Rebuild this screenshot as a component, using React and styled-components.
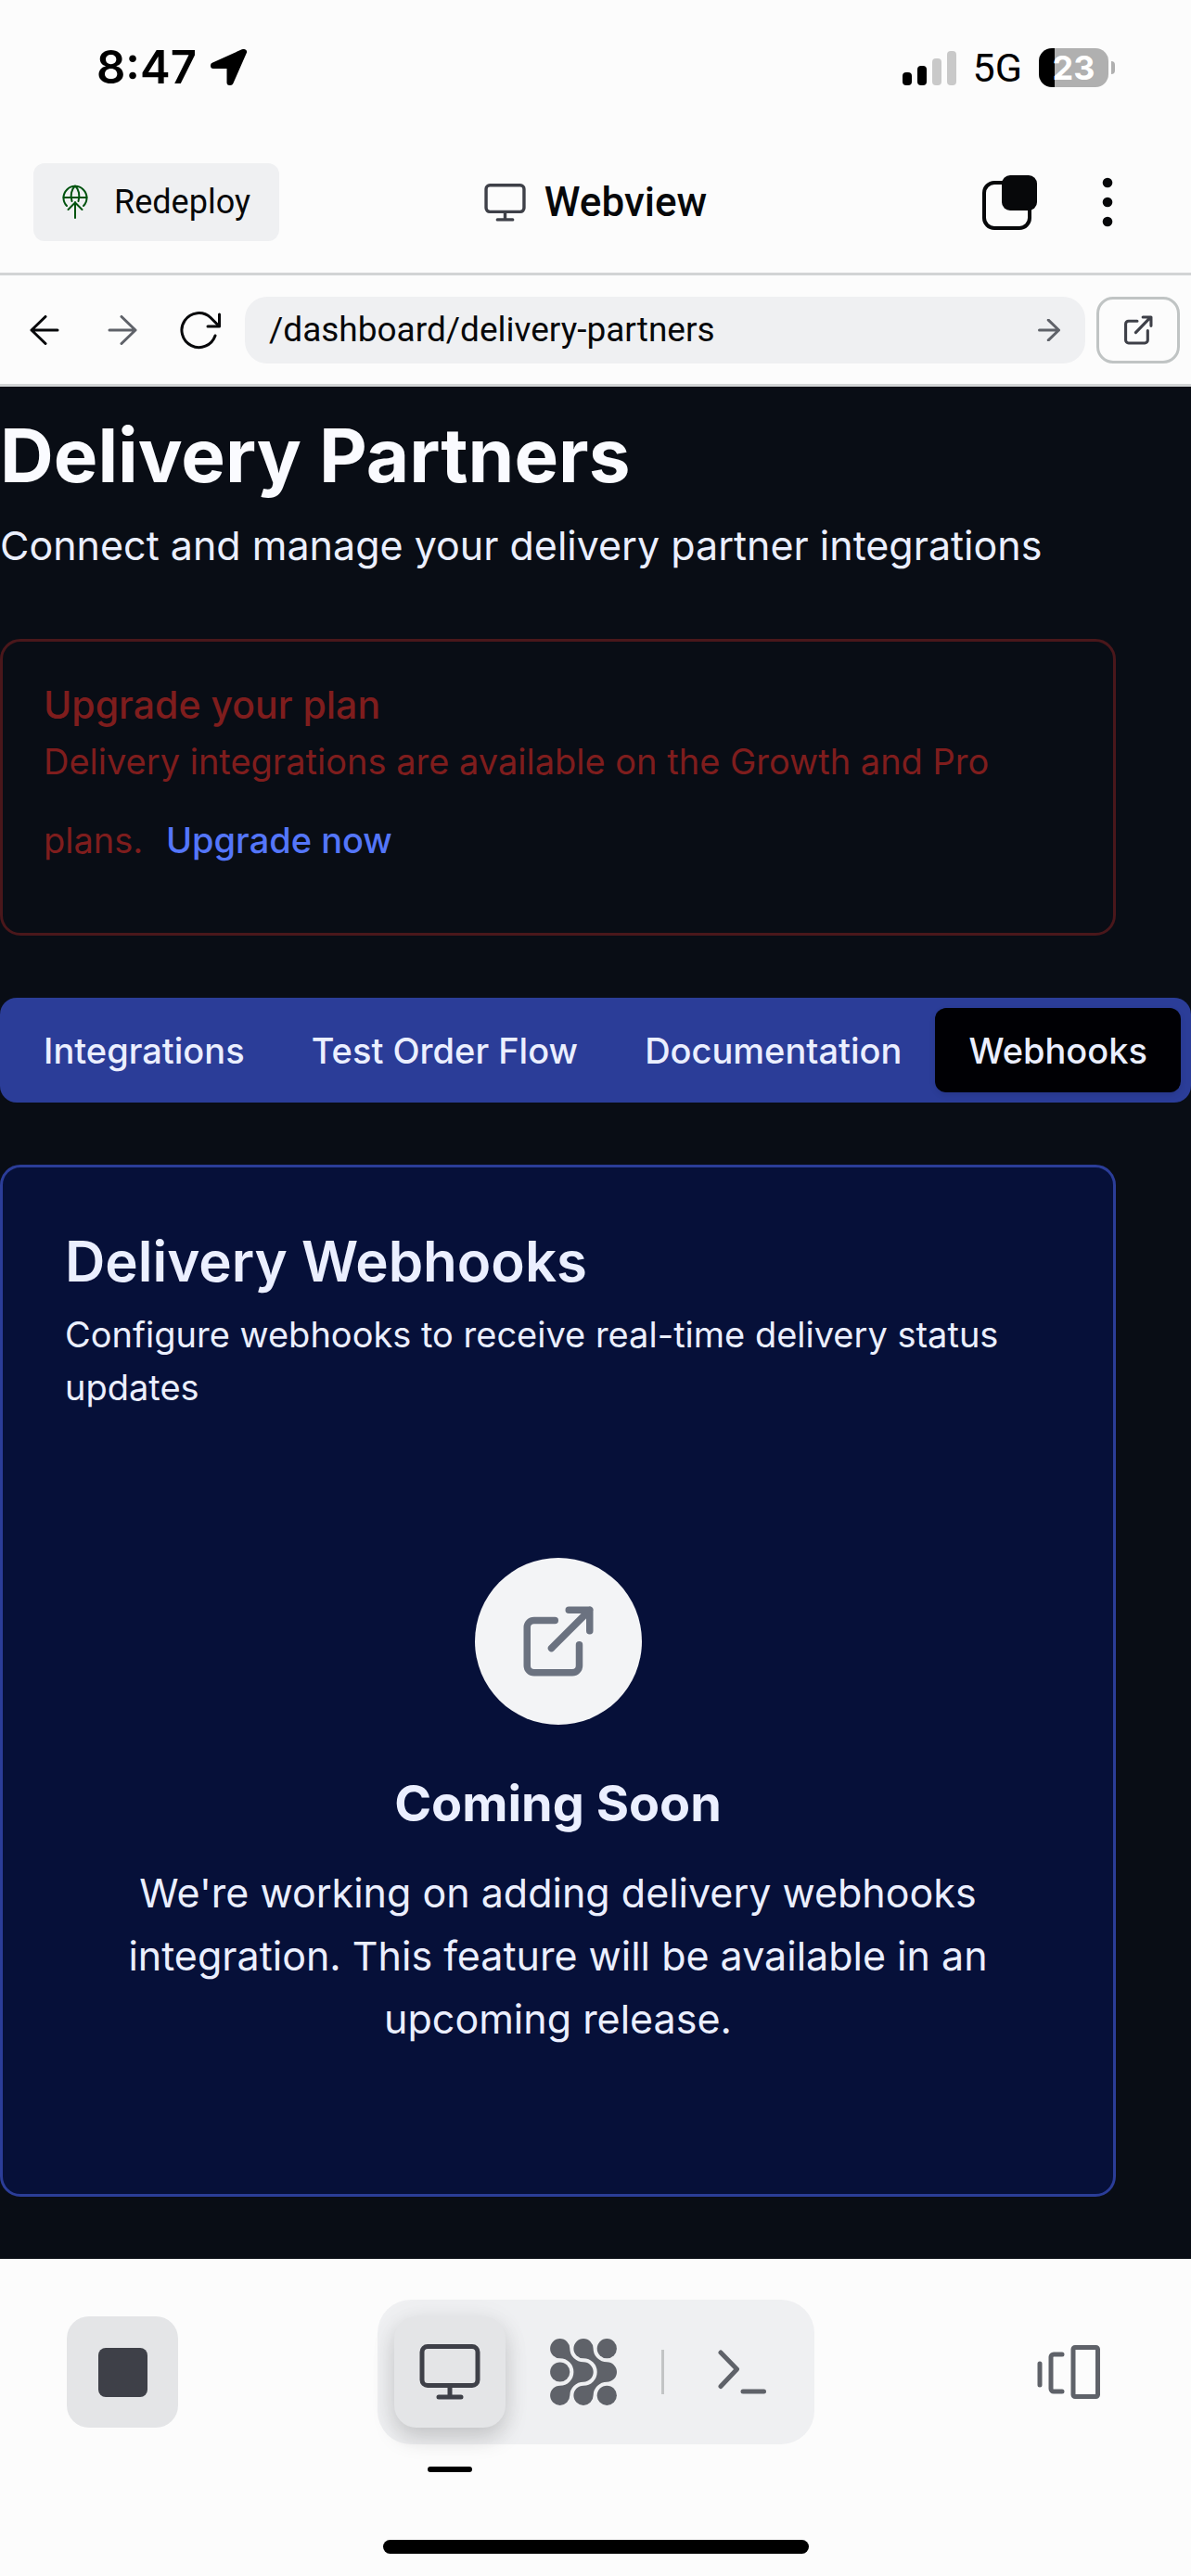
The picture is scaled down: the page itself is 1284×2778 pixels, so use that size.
import React from "react";
import styled, { createGlobalStyle } from "styled-components";

const sans = `Inter, Roboto, "Liberation Sans", sans-serif`;
const chrome = `Roboto, "Liberation Sans", sans-serif`;

const color = {
  shell: "#fcfcfc",
  field: "#eff0f2",
  pressed: "#e4e5e7",
  line: "#d2d4d5",
  ink: "#07080a",
  slate: "#3e4048",
  muted: "#5f6269",
  page: "#090d15",
  text: "#ebefff",
  danger: "#7f1d1d",
  dangerLine: "#4a171b",
  link: "#5476fa",
  blue: "#2b3d98",
  card: "#061039",
};

const GlobalStyle = createGlobalStyle`
  *, *::before, *::after { box-sizing: border-box; }
  body { margin: 0; background: ${color.shell}; }
  h1, h2, h3, p { margin: 0; }
  button, input { font: inherit; color: inherit; border: 0; background: none; padding: 0; margin: 0; }
  svg { display: block; flex: none; }
`;

const Screen = styled.div`
  display: flex;
  flex-direction: column;
  min-height: 100vh;
  background: ${color.shell};
  color: ${color.ink};
  font-family: ${chrome};
`;

/* Status bar */

const StatusBar = styled.div`
  display: flex;
  align-items: center;
  justify-content: space-between;
  height: 146px;
  padding: 0 82px 0 104px;
  color: #000;
`;

const StatusGroup = styled.div`
  display: flex;
  align-items: center;
  gap: ${(p) => p.$gap}px;
`;

const Clock = styled.time`
  font: 600 49px/58px ${sans};
`;

const Network = styled.span`
  font: 400 43px/58px ${chrome};
`;

const Battery = styled.div`
  display: flex;
  align-items: center;
  gap: 3px;

  &::after {
    content: "";
    width: 4px;
    height: 14px;
    border-radius: 0 8px 8px 0;
    background: #b0b0b0;
  }
`;

const BatteryLevel = styled.span`
  width: 75px;
  height: 42px;
  border-radius: 14px;
  background: linear-gradient(90deg, #000 23%, #b0b0b0 23%);
  color: #fff;
  font: 700 36px/42px ${sans};
  text-align: center;
`;

/* App toolbar */

const Toolbar = styled.header`
  display: grid;
  grid-template-columns: 1fr auto 1fr;
  align-items: center;
  padding: 30px 48px 34px 36px;
  border-bottom: 3px solid ${color.line};
`;

const DeployButton = styled.button`
  display: flex;
  align-items: center;
  justify-self: start;
  gap: 28px;
  height: 84px;
  padding: 0 31px;
  border-radius: 12px;
  background: ${color.field};
  font-size: 36px;
`;

const ToolbarTitle = styled.h2`
  display: flex;
  align-items: center;
  gap: 20px;
  padding-left: 12px;
  font-size: 44px;
  line-height: 52px;
  font-weight: 500;
`;

const ToolbarActions = styled.div`
  display: flex;
  justify-content: flex-end;
  gap: 21px;
`;

const IconButton = styled.button`
  display: grid;
  place-items: center;
  width: ${(p) => p.$size || 84}px;
  height: ${(p) => p.$size || 84}px;
`;

/* Address bar */

const AddressBar = styled.nav`
  display: flex;
  align-items: center;
  height: 120px;
  padding: 0 12px 0 6px;
  border-bottom: 3px solid ${color.line};
`;

const AddressForm = styled.form`
  display: flex;
  align-items: center;
  flex: 1;
  min-width: 0;
  height: 72px;
  margin: 0 12px 0 6px;
  padding: 0 15px 0 26px;
  border-radius: 24px;
  background: ${color.field};
`;

const AddressInput = styled.input`
  flex: 1;
  min-width: 0;
  height: 72px;
  font-size: 37px;
  outline: none;
`;

const OpenLink = styled.a`
  display: grid;
  place-items: center;
  width: 90px;
  height: 72px;
  border: 3px solid #c0c4c4;
  border-radius: 18px;
`;

/* Page */

const Page = styled.main`
  display: flex;
  flex: 1;
  flex-direction: column;
  gap: 67px;
  padding: 29px 0 67px;
  background: ${color.page};
  color: ${color.text};
  font-family: ${sans};
`;

const PageHeader = styled.div`
  display: flex;
  flex-direction: column;
  gap: 18px;
`;

const PageTitle = styled.h1`
  font-size: 80px;
  line-height: 90px;
  font-weight: 700;
  color: #fafbff;
`;

const Lead = styled.p`
  font-size: 43px;
  line-height: 68px;
`;

const PlanAlert = styled.section`
  margin-right: 81px;
  padding: 46px 44px 44px;
  border: 3px solid ${color.dangerLine};
  border-radius: 22px;
  color: ${color.danger};
`;

const AlertTitle = styled.h3`
  margin-bottom: 10px;
  font-size: 41px;
  line-height: 45px;
  font-weight: 500;
`;

const SmallText = styled.p`
  font-size: 38px;
  line-height: 57px;
`;

const UpgradeLink = styled.a`
  display: inline-flex;
  align-items: center;
  height: 112px;
  margin-left: 14px;
  color: ${color.link};
  font-weight: 500;
  text-decoration: none;
`;

const TabList = styled.div`
  display: flex;
  padding: 11px;
  border-radius: 18px;
  background: ${color.blue};
`;

const Tab = styled.button`
  flex: 1 1 auto;
  height: 91px;
  padding: 0 34px;
  border-radius: 12px;
  background: ${(p) => (p.$active ? "#000004" : "transparent")};
  box-shadow: ${(p) => (p.$active ? "0 3px 6px rgba(0, 0, 0, 0.1)" : "none")};
  font-size: 38px;
  font-weight: 500;
  white-space: nowrap;
`;

const Card = styled.section`
  margin-right: 81px;
  padding: 68px 67px 0;
  border: 3px solid ${color.blue};
  border-radius: 22px;
  background: ${color.card};
`;

const CardTitle = styled.h2`
  margin-bottom: 18px;
  font-size: 60px;
  line-height: 66px;
  font-weight: 600;
`;

const EmptyState = styled.div`
  display: flex;
  flex-direction: column;
  align-items: center;
  padding: 155px 0;
  text-align: center;
`;

const EmptyIcon = styled.div`
  display: grid;
  place-items: center;
  width: 180px;
  height: 180px;
  margin-bottom: 45px;
  border-radius: 50%;
  background: #f3f4f6;
`;

const EmptyTitle = styled.h3`
  margin-bottom: 22px;
  font-size: 54px;
  line-height: 80px;
  font-weight: 700;
`;

/* Bottom dock */

const Dock = styled.footer`
  display: flex;
  flex-direction: column;
  align-items: center;
  gap: 103px;
  padding: 44px 72px 24px;
`;

const DockRow = styled.div`
  display: grid;
  grid-template-columns: 1fr auto 1fr;
  align-items: center;
  width: 100%;
`;

const DockButton = styled.button`
  position: relative;
  display: grid;
  place-items: center;
  width: 120px;
  height: 120px;
  border-radius: 24px;
  justify-self: ${(p) => p.$align || "auto"};
  background: ${(p) => (p.$filled ? color.pressed : "transparent")};
`;

const ActiveDockButton = styled(DockButton)`
  background: ${color.pressed};
  box-shadow: 0 12px 24px rgba(0, 0, 0, 0.15), 0 3px 30px rgba(0, 0, 0, 0.06);

  &::after {
    content: "";
    position: absolute;
    bottom: -48px;
    width: 48px;
    height: 6px;
    border-radius: 3px;
    background: #000;
  }
`;

const DockGroup = styled.div`
  display: flex;
  align-items: center;
  gap: 24px;
  padding: 18px;
  border-radius: 36px;
  background: ${color.field};
`;

const DockDivider = styled.span`
  width: 3px;
  height: 48px;
  background: #c2c4c5;
`;

const HomeIndicator = styled.div`
  width: 459px;
  height: 15px;
  border-radius: 8px;
  background: #000;
`;

/* Icons */

const Line = styled.svg.attrs({ "aria-hidden": true })`
  fill: none;
  stroke: ${(p) => p.$color || color.ink};
  stroke-width: ${(p) => p.$weight || 3}px;
  stroke-linecap: round;
  stroke-linejoin: round;
`;

const LocationIcon = () => (
  <svg width="40" height="40" viewBox="0 0 40 40" aria-hidden="true">
    <path
      d="M35 3 3 17.5V18h17.5V36h1L36 3Z"
      stroke="#000"
      strokeWidth="6"
      strokeLinejoin="round"
    />
  </svg>
);

const SignalIcon = () => (
  <svg width="58" height="38" viewBox="0 0 58 38" aria-hidden="true">
    <rect x="0" y="24" width="10" height="14" rx="4" />
    <rect x="16" y="17" width="10" height="21" rx="4" />
    <rect x="32" y="9" width="10" height="29" rx="4" fill="#c9c9c9" />
    <rect x="48" y="1" width="10" height="37" rx="4" fill="#c9c9c9" />
  </svg>
);

const DeployIcon = () => (
  <Line width="28" height="38" viewBox="0 0 28 38" $color="#00530f" $weight={2}>
    <path d="M5 23A12.500 12.500 0 1 1 23 23" />
    <path d="M1.500 14h25" />
    <path d="M10.500 18C8.500 12 10 5 14 1.500 18 5 19.500 12 17.500 18" />
    <path d="M14 36V19M6.500 27 14 19.500 21.500 27" />
  </Line>
);

const MonitorIcon = ({ width, height }) => (
  <Line width={width} height={height} viewBox="0 0 66 60" $color={color.slate} $weight={5}>
    <rect x="3" y="2.500" width="60" height="42" rx="6" />
    <path d="M33 45v12M21 57h24" />
  </Line>
);

const WindowsIcon = () => (
  <Line width="60" height="60" viewBox="0 0 60 60" $weight={4}>
    <rect x="2" y="9" width="49" height="49" rx="11" />
    <rect x="21" y="1" width="38" height="38" rx="9" fill={color.ink} stroke="none" />
  </Line>
);

const MoreIcon = () => (
  <svg width="12" height="54" viewBox="0 0 12 54" fill={color.ink} aria-hidden="true">
    <circle cx="6" cy="6" r="5.300" />
    <circle cx="6" cy="27" r="5.300" />
    <circle cx="6" cy="48" r="5.300" />
  </svg>
);

const BackIcon = () => (
  <Line width="32" height="32" viewBox="0 0 32 32">
    <path d="M30 16H2M17 1.500 2 16l15 14.500" />
  </Line>
);

const ForwardIcon = ({ size = 32, weight = 3 }) => (
  <Line width={size} height={size} viewBox="0 0 32 32" $color={color.muted} $weight={weight}>
    <path d="M2 16h28M15 1.500 30 16 15 30.500" />
  </Line>
);

const ReloadIcon = () => (
  <Line width="44" height="42" viewBox="0 0 44 42">
    <path d="M38 27A18.500 18.500 0 1 1 33 7.500L42 16.500" />
    <path d="M42.500 4V17H30" />
  </Line>
);

const OpenIcon = () => (
  <Line width="32" height="32" viewBox="0 0 30 31" $color={color.slate}>
    <path d="M14 6H5a3 3 0 0 0-3 3v17a3 3 0 0 0 3 3h17a3 3 0 0 0 3-3V16" />
    <path d="M12.500 18 28 2M20 2h8.500v9" />
  </Line>
);

const ExternalIcon = () => (
  <Line width="90" height="90" viewBox="0 0 24 24" $color="#6b7280" $weight={2}>
    <path d="M18 13v6a2 2 0 0 1-2 2H5a2 2 0 0 1-2-2V8a2 2 0 0 1 2-2h6" />
    <path d="M15 3h6v6M10 14 21 3" />
  </Line>
);

const AgentIcon = () => (
  <svg width="72" height="72" viewBox="0 0 72 72" fill={color.muted} aria-hidden="true">
    <circle cx="10.700" cy="36" r="10.600" />
    <circle cx="61.300" cy="10.700" r="10.600" />
    <circle cx="61.300" cy="61.300" r="10.600" />
    {[0, 25.3].map((x) => (
      <path
        key={x}
        transform={`translate(${x} 0)`}
        d="M10.700 21.300A10.600 10.600 0 1 1 21.300 10.700 14.700 14.700 0 0 0 36 25.300a10.700 10.700 0 0 1 0 21.400A14.700 14.700 0 0 0 21.300 61.300 10.600 10.600 0 1 1 10.700 50.700a14.700 14.700 0 0 0 0-29.400Z"
      />
    ))}
  </svg>
);

const ShellIcon = () => (
  <Line width="52" height="48" viewBox="0 0 52 48" $color={color.muted} $weight={5}>
    <path d="m3 3 17.500 18L3 39.500M27 45h22.500" />
  </Line>
);

const PanelsIcon = () => (
  <Line width="68" height="58" viewBox="0 0 68 58" $color={color.muted} $weight={5}>
    <path d="M3 20v23M27 10H18a3 3 0 0 0-3 3v34a3 3 0 0 0 3 3h9" />
    <rect x="39" y="2.500" width="26.500" height="53" rx="2" />
  </Line>
);

const StopIcon = () => (
  <svg width="53" height="53" viewBox="0 0 53 53" aria-hidden="true">
    <rect width="53" height="53" rx="8" fill={color.slate} />
  </svg>
);

const tabs = ["Integrations", "Test Order Flow", "Documentation", "Webhooks"];

export default function App() {
  return (
    <Screen>
      <GlobalStyle />

      <StatusBar>
        <StatusGroup $gap={15}>
          <Clock>8:47</Clock>
          <LocationIcon />
        </StatusGroup>
        <StatusGroup $gap={18}>
          <SignalIcon />
          <Network>5G</Network>
          <Battery>
            <BatteryLevel>23</BatteryLevel>
          </Battery>
        </StatusGroup>
      </StatusBar>

      <Toolbar>
        <DeployButton type="button">
          <DeployIcon />
          Redeploy
        </DeployButton>
        <ToolbarTitle>
          <MonitorIcon width={45} height={41} />
          Webview
        </ToolbarTitle>
        <ToolbarActions>
          <IconButton type="button" aria-label="Tabs">
            <WindowsIcon />
          </IconButton>
          <IconButton type="button" aria-label="More">
            <MoreIcon />
          </IconButton>
        </ToolbarActions>
      </Toolbar>

      <AddressBar aria-label="Browser">
        <IconButton type="button" aria-label="Back">
          <BackIcon />
        </IconButton>
        <IconButton type="button" aria-label="Forward">
          <ForwardIcon />
        </IconButton>
        <IconButton type="button" aria-label="Reload">
          <ReloadIcon />
        </IconButton>
        <AddressForm onSubmit={(e) => e.preventDefault()}>
          <AddressInput
            type="text"
            aria-label="Path"
            defaultValue="/dashboard/delivery-partners"
          />
          <IconButton type="submit" aria-label="Go" $size={48}>
            <ForwardIcon size={24} weight={4} />
          </IconButton>
        </AddressForm>
        <OpenLink href="#open" aria-label="Open in new tab">
          <OpenIcon />
        </OpenLink>
      </AddressBar>

      <Page>
        <PageHeader>
          <PageTitle>Delivery Partners</PageTitle>
          <Lead>Connect and manage your delivery partner integrations</Lead>
        </PageHeader>

        <PlanAlert>
          <AlertTitle>Upgrade your plan</AlertTitle>
          <SmallText>
            Delivery integrations are available on the Growth and Pro plans.{" "}
            <UpgradeLink href="#upgrade">Upgrade now</UpgradeLink>
          </SmallText>
        </PlanAlert>

        <TabList role="tablist">
          {tabs.map((label) => (
            <Tab
              key={label}
              type="button"
              role="tab"
              aria-selected={label === "Webhooks"}
              $active={label === "Webhooks"}
            >
              {label}
            </Tab>
          ))}
        </TabList>

        <Card>
          <CardTitle>Delivery Webhooks</CardTitle>
          <SmallText>
            Configure webhooks to receive real-time delivery status updates
          </SmallText>
          <EmptyState>
            <EmptyIcon>
              <ExternalIcon />
            </EmptyIcon>
            <EmptyTitle>Coming Soon</EmptyTitle>
            <Lead>
              We're working on adding delivery webhooks integration. This feature
              will be available in an upcoming release.
            </Lead>
          </EmptyState>
        </Card>
      </Page>

      <Dock>
        <DockRow>
          <DockButton type="button" aria-label="Stop" $filled $align="start">
            <StopIcon />
          </DockButton>
          <DockGroup>
            <ActiveDockButton type="button" aria-label="Webview">
              <MonitorIcon width={66} height={60} />
            </ActiveDockButton>
            <DockButton type="button" aria-label="Agent">
              <AgentIcon />
            </DockButton>
            <DockDivider />
            <DockButton type="button" aria-label="Shell">
              <ShellIcon />
            </DockButton>
          </DockGroup>
          <DockButton type="button" aria-label="All panels" $align="end">
            <PanelsIcon />
          </DockButton>
        </DockRow>
        <HomeIndicator />
      </Dock>
    </Screen>
  );
}
